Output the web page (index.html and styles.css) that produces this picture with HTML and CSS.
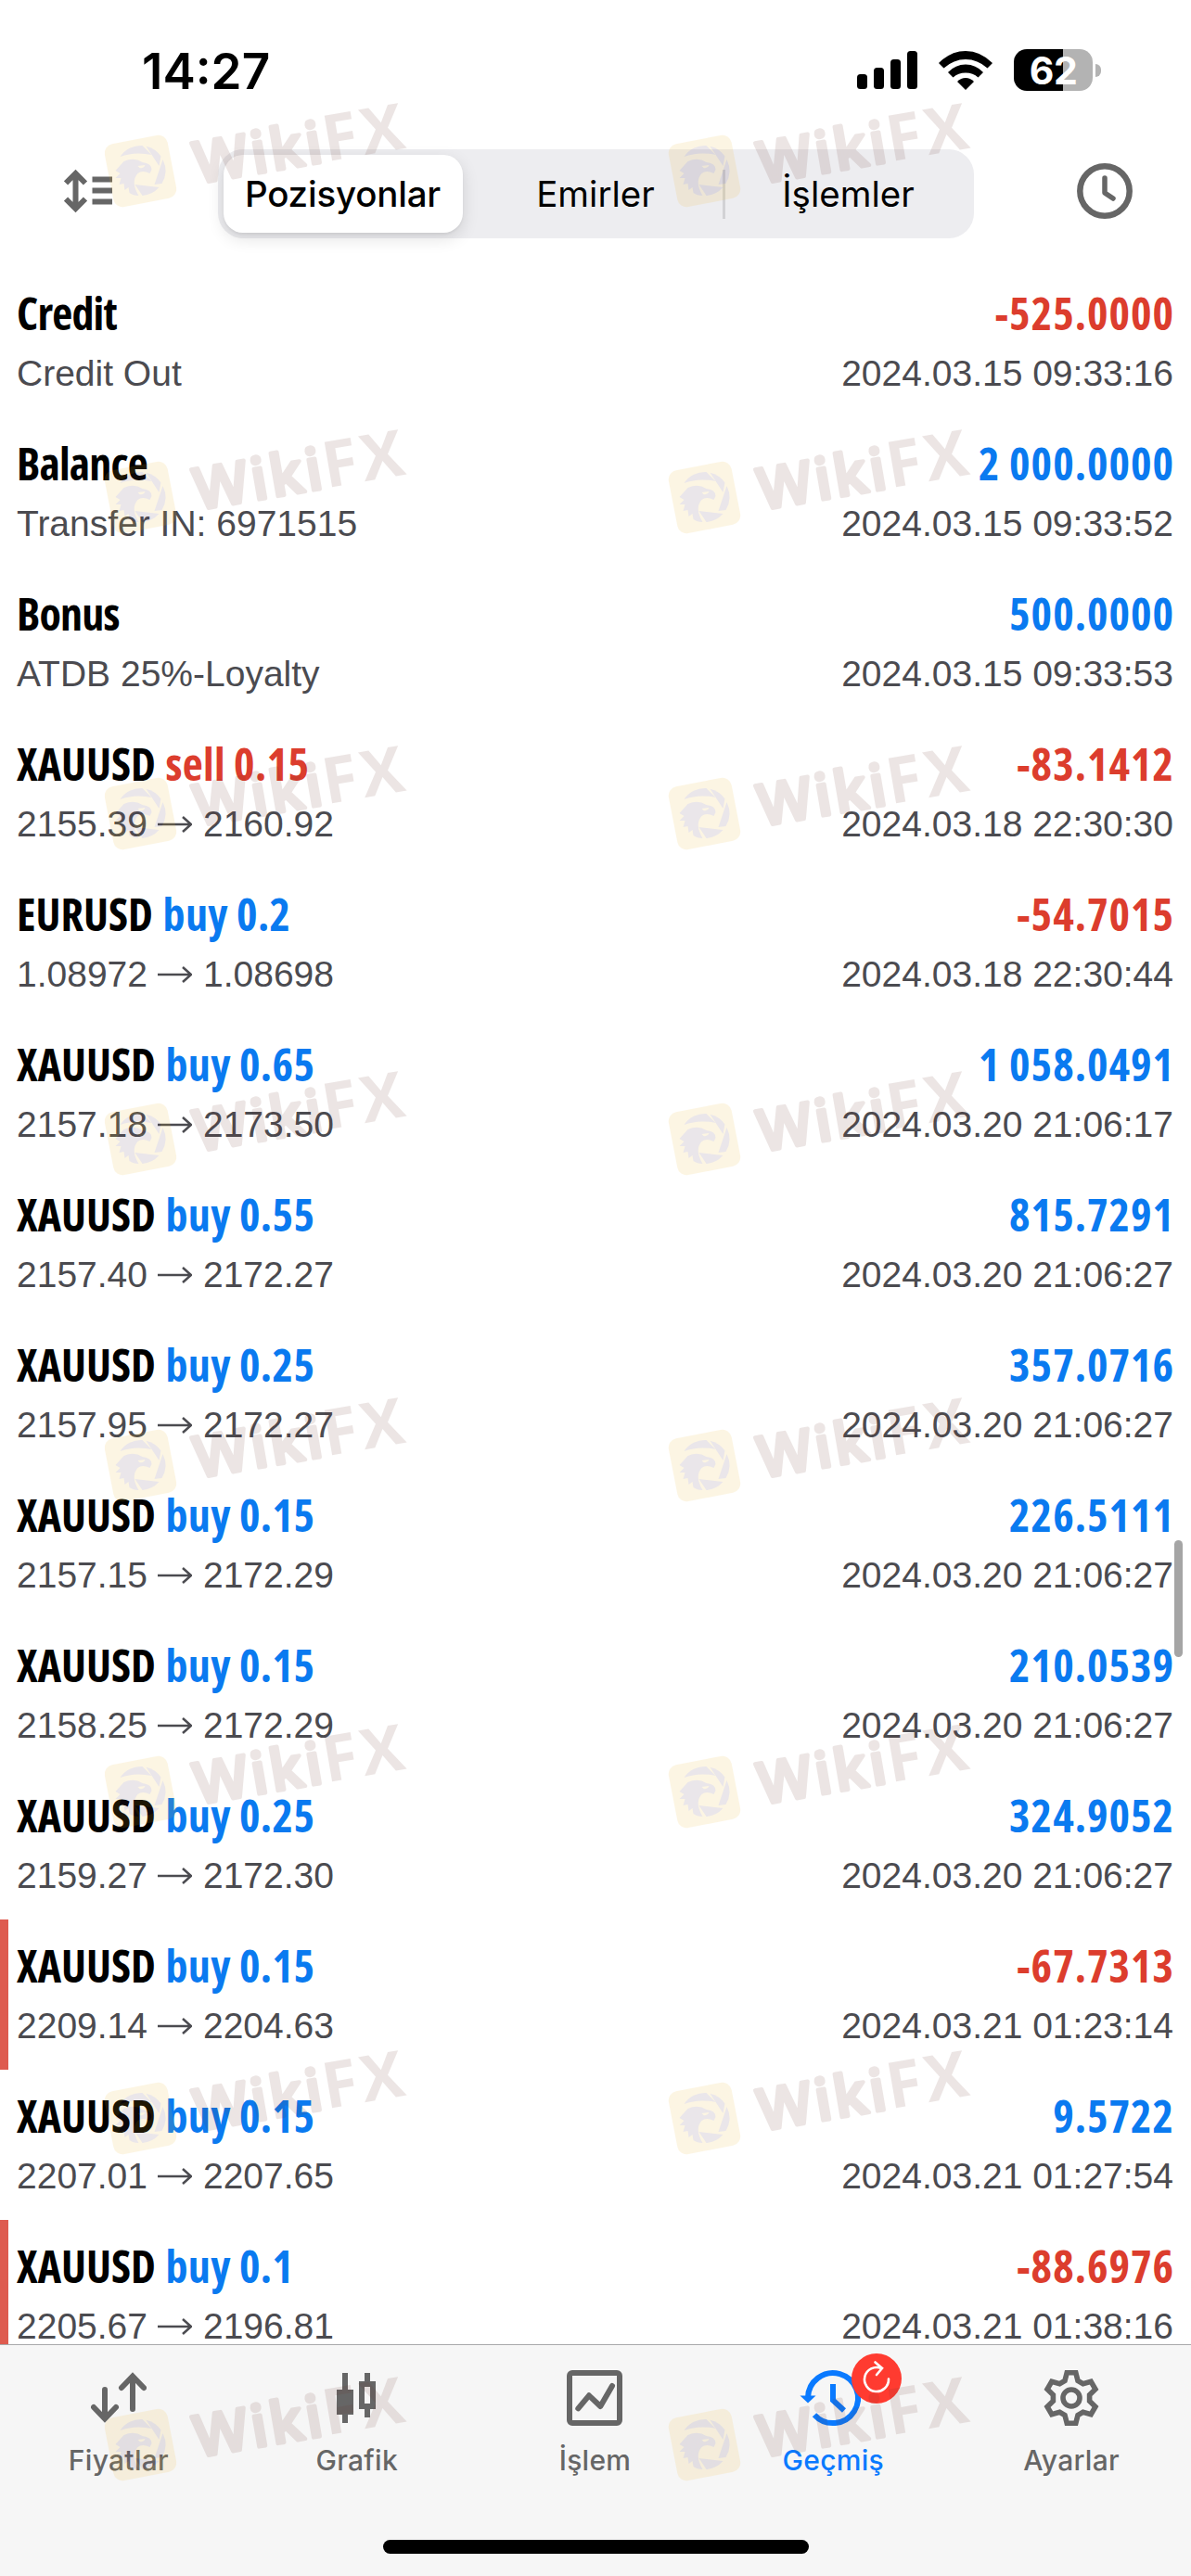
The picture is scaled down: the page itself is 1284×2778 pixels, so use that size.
FILE: index.html
```html
<!DOCTYPE html>
<html lang="tr">
<head>
<meta charset="UTF-8">
<meta name="viewport" content="width=device-width, initial-scale=1.0">
<title>Geçmiş</title>
<link rel="stylesheet" href="styles.css">
</head>
<body>

<div class="status-bar">
    <span class="time">14:27</span>
    <div class="status-icons">
        <svg class="signal" width="65" height="41" viewBox="0 0 65 41">
            <rect x="0" y="25" width="11" height="16" rx="3.5"/>
            <rect x="18" y="18" width="11" height="23" rx="3.5"/>
            <rect x="36" y="9" width="11" height="32" rx="3.5"/>
            <rect x="54" y="0" width="11" height="41" rx="3.5"/>
        </svg>
        <svg class="wifi" width="58" height="42" viewBox="0 0 58 42">
            <path d="M0 13 Q13 0 29 0 Q45 0 58 13 L52.5 18.5 Q42 9 29 9 Q16 9 5.5 18.5Z"/>
            <path d="M10 23 Q18 14.5 29 14.5 Q40 14.5 48 23 L42.5 28.5 Q37 23.5 29 23.5 Q21 23.5 15.5 28.5Z"/>
            <path d="M20 33 Q24 29 29 29 Q34 29 38 33 L29 42Z"/>
        </svg>
        <div class="battery">
            <span class="battery-body">62</span>
            <span class="battery-tip"></span>
        </div>
    </div>
</div>

<div class="header">
    <svg width="52" height="48" viewBox="0 0 52 48" fill="none" stroke="#666" stroke-width="6">
        <path d="M12.5 5V43M2 15.5L12.5 5L23 15.5M2 32.5L12.5 43L23 32.5"/>
        <path d="M30.5 11.5H52M30.5 23.5H52M30.5 35.5H52"/>
    </svg>
    <div class="segments">
        <button class="segment active">Pozisyonlar</button>
        <button class="segment middle">Emirler</button>
        <button class="segment last">İşlemler</button>
    </div>
    <svg width="60" height="60" viewBox="0 0 60 60" fill="none" stroke="#666" stroke-width="6.5">
        <circle cx="30" cy="30" r="26.7"/>
        <path d="M30 16V32L39 38" stroke-width="5.5" stroke-linecap="round" stroke-linejoin="round"/>
    </svg>
</div>

<div class="history" id="history">
    <div class="scrollbar"></div>
</div>

<div class="tabbar">
    <div class="tab">
        <svg width="60" height="60" viewBox="0 0 60 60" fill="none" stroke="#666" stroke-width="6" stroke-linecap="round">
            <path d="M15 21V52M3 40L15 52.5L27 40M45 42V8M33 19L45 6.5L57 19"/>
        </svg>
        <span>Fiyatlar</span>
    </div>
    <div class="tab">
        <svg width="60" height="60" viewBox="0 0 60 60" fill="#666">
            <path d="M14 3H20V21H26V48H20V57H14V48H8V21H14Z"/>
            <path fill-rule="evenodd" d="M38 3H44V12H50V42H44V51H38V42H32V12H38ZM38 18V36H44V18Z"/>
        </svg>
        <span>Grafik</span>
    </div>
    <div class="tab">
        <svg width="60" height="60" viewBox="0 0 60 60" fill="none" stroke="#666" stroke-width="6">
            <rect x="3" y="3" width="54" height="54" rx="3"/>
            <path d="M12.3 41.3L24 27.3L36.3 39L49 17" stroke-linecap="round" stroke-linejoin="round"/>
        </svg>
        <span>İşlem</span>
    </div>
    <div class="tab active">
        <div class="tab-icon">
            <svg width="60" height="60" viewBox="0 0 60 60" fill="none" stroke="#0a7aff" stroke-width="6" overflow="visible">
                <path d="M3 30A27 27 0 1 1 10 48.2"/>
                <path d="M30 15V32.5L42 43.5"/>
                <path d="M-5.5 27.5H11.5L3 35.5Z" fill="#0a7aff" stroke="none"/>
            </svg>
            <svg class="badge" width="54" height="54" viewBox="0 0 54 54" fill="none" stroke="#fff" stroke-width="2.6">
                <path d="M40 27.5A13 13 0 1 1 32 16" stroke-linecap="round"/>
                <path d="M25.5 9.5L33 16L27 23" stroke-linecap="round"/>
            </svg>
        </div>
        <span>Geçmiş</span>
    </div>
    <div class="tab">
        <svg width="60" height="60" viewBox="-30 -30 60 60" fill="none" stroke="#666" stroke-width="5.6">
            <circle r="9"/>
            <path d="M-4.8-27.2H4.8L7-18.6L12.6-15.3L21.15-17.75L25.95-9.44L19.6-3.24V3.24L25.95 9.44L21.15 17.75L12.6 15.3L7 18.6L4.8 27.2H-4.8L-7 18.6L-12.6 15.3L-21.15 17.75L-25.95 9.44L-19.6 3.24V-3.24L-25.95-9.44L-21.15-17.75L-12.6-15.3L-7-18.6Z"/>
        </svg>
        <span>Ayarlar</span>
    </div>
    <div class="home-indicator"></div>
</div>

<svg class="watermarks" id="watermarks" width="1284" height="2778" viewBox="0 0 1284 2778">
    <defs>
        <g id="mark">
            <rect x="25" y="52" width="69" height="69" rx="10" transform="rotate(-11 59.5 86.5)" fill="#eeb420"/>
            <g transform="translate(59.5 86)" fill="#5a3c5a">
                <path d="M-22-15A27 27 0 0 1 2-27L12-17Q-6-21-22-15Z"/>
                <path d="M6-26.3A27 27 0 0 1 22-15.5L20-5Z"/>
                <path d="M24-12A27 27 0 0 1 23 14L15 15Z"/>
                <path d="M20 18A27 27 0 0 1 2 27L-6 15Z"/>
                <path d="M-27 0L-18-10Q-7-15 2-9Q12-8 12-1L10 3Q2-1-3 3Q-11 12-2 27Q-8 27-12 24L-13 18L-17 21L-18 14L-23 15L-21 8L-27 8L-22 3Z"/>
                <path d="M-3-5L5-6Q3-2-1-3Z" fill="#eeb420"/>
            </g>
            <g transform="translate(121 100) rotate(-9.7)">
                <text class="mark-text round" textLength="139">Wiki</text>
                <text class="mark-text" x="141" textLength="88">FX</text>
            </g>
        </g>
    </defs>
</svg>

<script>
const history_rows = [
    ['Credit', '', 'Credit Out', '-525.0000', '2024.03.15 09:33:16'],
    ['Balance', '', 'Transfer IN: 6971515', '2 000.0000', '2024.03.15 09:33:52'],
    ['Bonus', '', 'ATDB 25%-Loyalty', '500.0000', '2024.03.15 09:33:53'],
    ['XAUUSD', 'sell 0.15', '2155.39 > 2160.92', '-83.1412', '2024.03.18 22:30:30'],
    ['EURUSD', 'buy 0.2', '1.08972 > 1.08698', '-54.7015', '2024.03.18 22:30:44'],
    ['XAUUSD', 'buy 0.65', '2157.18 > 2173.50', '1 058.0491', '2024.03.20 21:06:17'],
    ['XAUUSD', 'buy 0.55', '2157.40 > 2172.27', '815.7291', '2024.03.20 21:06:27'],
    ['XAUUSD', 'buy 0.25', '2157.95 > 2172.27', '357.0716', '2024.03.20 21:06:27'],
    ['XAUUSD', 'buy 0.15', '2157.15 > 2172.29', '226.5111', '2024.03.20 21:06:27'],
    ['XAUUSD', 'buy 0.15', '2158.25 > 2172.29', '210.0539', '2024.03.20 21:06:27'],
    ['XAUUSD', 'buy 0.25', '2159.27 > 2172.30', '324.9052', '2024.03.20 21:06:27'],
    ['XAUUSD', 'buy 0.15', '2209.14 > 2204.63', '-67.7313', '2024.03.21 01:23:14', true],
    ['XAUUSD', 'buy 0.15', '2207.01 > 2207.65', '9.5722', '2024.03.21 01:27:54'],
    ['XAUUSD', 'buy 0.1', '2205.67 > 2196.81', '-88.6976', '2024.03.21 01:38:16', true]
];

const arrow = '<svg class="arrow" width="37" height="18" viewBox="0 0 37 18"><path d="M0 9H36M27 1L36 9L27 17"/></svg>';
const list = document.getElementById('history');

for (let [name, deal, info, amount, date, stopped] of history_rows) {
    let row = document.createElement('div');
    row.className = stopped ? 'row stopped' : 'row';
    let nameClass = deal ? 'symbol' : 'operation';
    let side = deal.startsWith('sell') ? 'red' : 'blue';
    let sign = amount.startsWith('-') ? 'red' : 'blue';
    row.innerHTML = `
        <div class="title"><span><span class="${nameClass}">${name}</span> <span class="deal ${side}">${deal}</span></span><span class="amount ${sign}">${amount}</span></div>
        <div class="details"><span>${info.replace(' > ', arrow)}</span><span>${date}</span></div>`;
    list.appendChild(row);
}

// two watermarks per line
const marks = document.getElementById('watermarks');
for (let y of [98, 450, 791, 1142, 1494, 1846, 2198, 2550]) {
    for (let x of [92, 700]) {
        let use = document.createElementNS('http://www.w3.org/2000/svg', 'use');
        use.setAttribute('href', '#mark');
        use.setAttribute('x', x);
        use.setAttribute('y', y);
        use.setAttribute('opacity', '0.12');
        marks.appendChild(use);
    }
}
</script>

</body>
</html>
```
FILE: styles.css
```css
* {
    box-sizing: border-box;
}

body {
    position: relative;
    display: flex;
    flex-direction: column;
    width: 1284px;
    height: 2778px;
    margin: 0;
    overflow: hidden;
    background-color: #fff;
    font-family: Inter, "Liberation Sans", sans-serif;
    color: #000;
}

svg {
    display: block;
    flex: none;
}

.status-bar {
    display: flex;
    justify-content: space-between;
    height: 161px;
    padding: 53px 97px 0 153px;
}

.time {
    font-size: 53px;
    font-weight: 600;
    line-height: 49px;
}

.status-icons {
    display: flex;
    align-items: center;
    gap: 23px;
    height: 45px;
}

.battery {
    display: flex;
    align-items: center;
    gap: 3px;
}

.battery-body {
    width: 85px;
    height: 45px;
    border-radius: 14px;
    background: linear-gradient(to right, #000 53px, #b3b3b3 53px);
    color: #fff;
    font-size: 41px;
    font-weight: 700;
    line-height: 46px;
    letter-spacing: -0.5px;
    text-align: center;
}

.battery-tip {
    width: 6px;
    height: 14px;
    border-radius: 0 6px 6px 0;
    background-color: #b3b3b3;
}

.header {
    display: flex;
    align-items: center;
    justify-content: space-between;
    height: 90px;
    margin-bottom: 37px;
    padding: 0 63px 0 69px;
}

.segments {
    display: flex;
    width: 815px;
    height: 96px;
    padding: 6px;
    margin: 6px 0 0 2px;
    border-radius: 27px;
    background-color: #ededf0;
}

.segment {
    position: relative;
    flex: 1;
    padding: 0 0 0 7px;
    border: none;
    border-radius: 21px;
    background: none;
    font-family: inherit;
    font-size: 38.5px;
    font-weight: 400;
    color: #000;
}

.segment.active {
    flex: 0 0 258px;
    padding: 0;
    background-color: #fff;
    font-weight: 500;
    letter-spacing: -0.2px;
    box-shadow: 0 6px 18px rgba(0, 0, 0, 0.12), 0 2px 3px rgba(0, 0, 0, 0.05);
}

.segment.middle {
    flex: 0 0 280px;
}

.segment.last::before {
    content: "";
    position: absolute;
    left: 0;
    top: 16px;
    width: 3px;
    height: 53px;
    background-color: #d2d2d5;
}

.history {
    position: relative;
    flex: 1;
    overflow: hidden;
}

.row {
    height: 162px;
    padding: 23px 19px 0 18px;
}

.row.stopped {
    padding-left: 9px;
    border-left: 9px solid #de5b4f;
}

.title,
.details {
    display: flex;
    justify-content: space-between;
    white-space: nowrap;
}

.title {
    font-family: "Open Sans", sans-serif;
    font-size: 48px;
    font-stretch: 75%;
    font-weight: 700;
    line-height: 54px;
}

.operation {
    letter-spacing: -0.8px;
}

.deal {
    margin-left: 2px;
    letter-spacing: 0.4px;
}

.amount {
    margin-right: -1px;
    letter-spacing: 1px;
}

.details {
    margin-top: 19px;
    font-family: "Liberation Sans", Arial, sans-serif;
    font-size: 39px;
    line-height: 38px;
    color: #4b4b50;
}

.arrow {
    display: inline-block;
    margin: 0 12px 0 11px;
    vertical-align: 4px;
    fill: none;
    stroke: #4b4b50;
    stroke-width: 2.5;
}

.red {
    color: #dc3d2d;
}

.blue {
    color: #0a7af0;
}

.scrollbar {
    position: absolute;
    left: 1266px;
    top: 1373px;
    width: 9px;
    height: 126px;
    border-radius: 5px;
    background-color: #a5a5a5;
}

.tabbar {
    display: flex;
    flex-wrap: wrap;
    justify-content: center;
    align-content: flex-start;
    height: 250px;
    border-top: 1px solid #a9a9ab;
    background-color: #f6f6f6;
}

.tab {
    display: flex;
    flex-direction: column;
    align-items: center;
    gap: 19px;
    width: 20%;
    height: 210px;
    padding: 27px 1px 0 0;
    font-size: 30px;
    font-weight: 500;
    line-height: 37px;
    letter-spacing: 0.3px;
    color: #666;
}

.tab.active {
    color: #0a7aff;
}

.tab-icon {
    position: relative;
}

.badge {
    position: absolute;
    left: 50px;
    top: -18px;
    border-radius: 50%;
    background-color: #ff3b30;
}

.home-indicator {
    width: 459px;
    height: 15px;
    border-radius: 8px;
    background-color: #000;
}

.watermarks {
    position: absolute;
    left: 0;
    top: 0;
    pointer-events: none;
}

.mark-text {
    font-family: "Open Sans", sans-serif;
    font-size: 69px;
    font-weight: 700;
    fill: #693228;
}

.mark-text.round {
    font-size: 62px;
    font-weight: 600;
    stroke: #693228;
    stroke-width: 4;
    stroke-linejoin: round;
}
```
